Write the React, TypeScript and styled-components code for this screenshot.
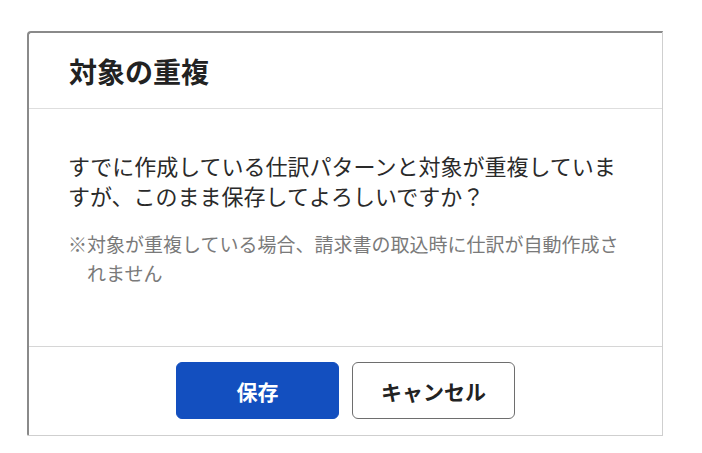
import React from 'react';
import styled, { createGlobalStyle } from 'styled-components';

const GlobalStyle = createGlobalStyle`
  html, body {
    margin: 0;
    padding: 0;
    background: #ffffff;
  }
  body {
    font-family: "Noto Sans CJK JP", "Noto Sans", sans-serif;
    color: #222;
  }
`;

const Page = styled.div`
  padding: 31px 0 0 27px;
`;

const Dialog = styled.div`
  width: 636px;
  box-sizing: border-box;
  background: #fff;
  border: 1px solid #cfcfcf;
  border-top: 2px solid #8a8a8a;
  border-left: 2px solid #8a8a8a;
  border-radius: 4px 0 0 2px;
  display: flex;
  flex-direction: column;
`;

const Header = styled.div`
  height: 75px;
  display: flex;
  align-items: center;
  padding: 0 40px;
  border-bottom: 1px solid #dedede;
`;

const Title = styled.h2`
  margin: 0;
  font-size: 28px;
  font-weight: 700;
  color: #222;
  line-height: 1;
`;

const Body = styled.div`
  height: 238px;
  box-sizing: border-box;
  padding: 41px 38px 0 39px;
  border-bottom: 1px solid #d6d6d6;
`;

const Message = styled.p`
  margin: 0;
  font-size: 22px;
  line-height: 30px;
  color: #2a2a2a;
`;

const Note = styled.p`
  margin: 19px 0 0;
  font-size: 19px;
  line-height: 29px;
  color: #7a7a7a;
  padding-left: 1em;
  text-indent: -1em;
`;

const Footer = styled.div`
  display: flex;
  justify-content: center;
  gap: 13px;
  padding: 15px 0 16px;
`;

const Button = styled.button<{ $primary?: boolean }>`
  width: 163px;
  height: 57px;
  box-sizing: border-box;
  border-radius: 6px;
  font-family: "Noto Sans CJK JP", "Noto Sans", sans-serif;
  font-size: 21px;
  font-weight: 700;
  cursor: pointer;
  background: ${(p) => (p.$primary ? '#134fbf' : '#ffffff')};
  color: ${(p) => (p.$primary ? '#ffffff' : '#222')};
  border: 1px solid ${(p) => (p.$primary ? '#134fbf' : '#6e6e6e')};
`;

export default function App() {
  return (
    <>
      <GlobalStyle />
      <Page>
        <Dialog>
          <Header>
            <Title>対象の重複</Title>
          </Header>
          <Body>
            <Message>
              すでに作成している仕訳パターンと対象が重複していますが、このまま保存してよろしいですか？
            </Message>
            <Note>※対象が重複している場合、請求書の取込時に仕訳が自動作成されません</Note>
          </Body>
          <Footer>
            <Button $primary>保存</Button>
            <Button>キャンセル</Button>
          </Footer>
        </Dialog>
      </Page>
    </>
  );
}
